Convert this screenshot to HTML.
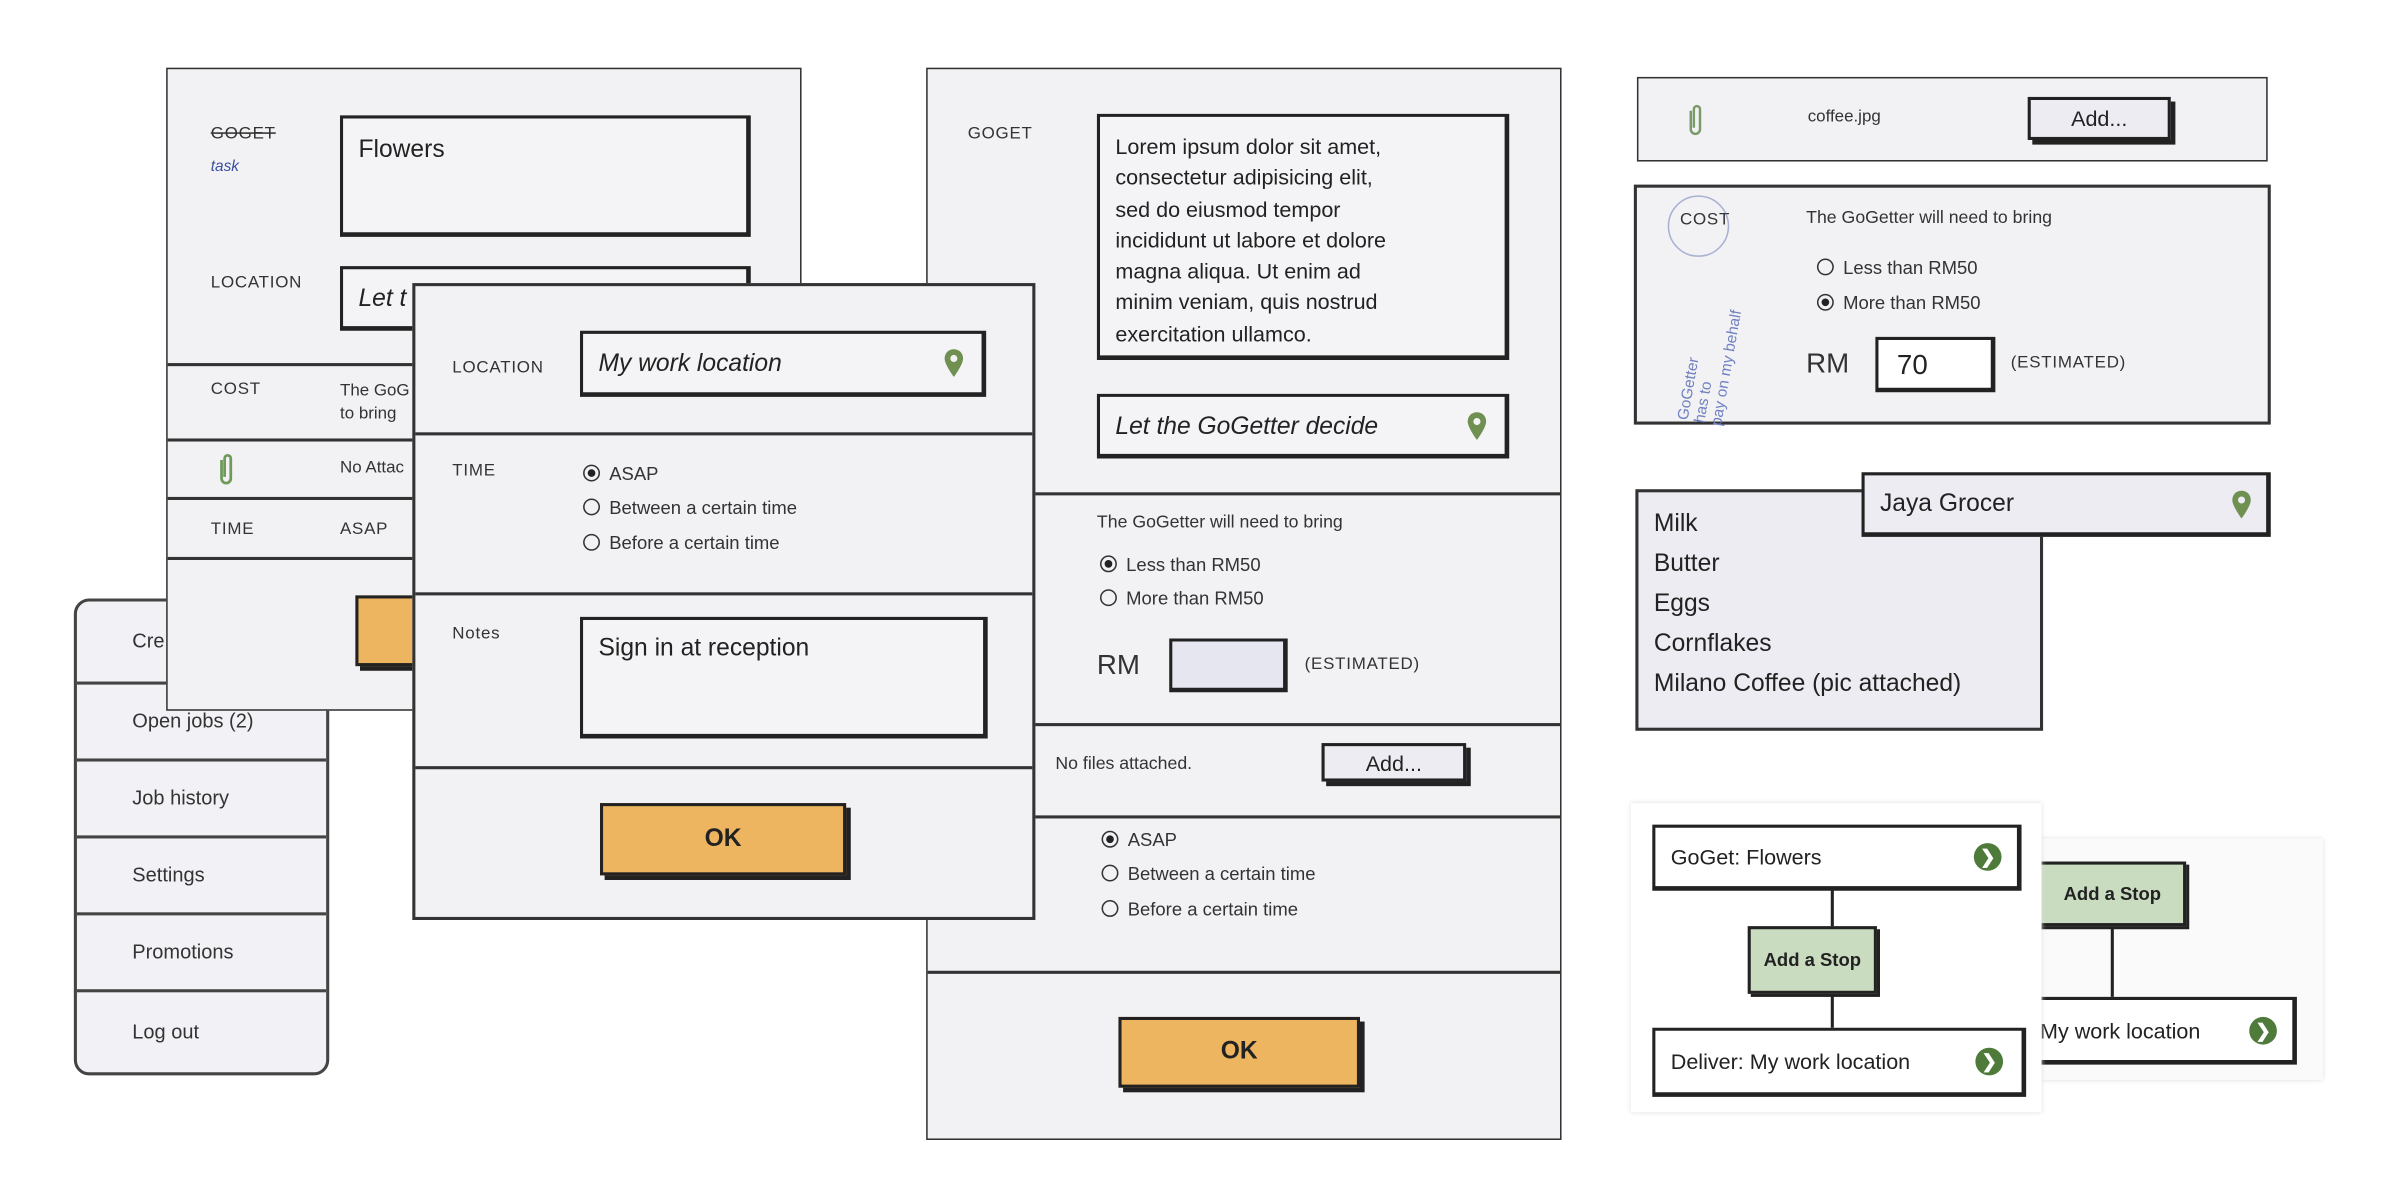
<!DOCTYPE html>
<html><head><meta charset="utf-8"><style>
*{box-sizing:border-box;margin:0;padding:0}
html,body{width:2400px;height:1200px;background:#fff;overflow:hidden}
#w{position:absolute;left:0;top:0;width:1560px;height:780px;transform:scale(1.53846);transform-origin:0 0;font-family:"Liberation Sans",sans-serif;color:#222}
.a{position:absolute}
.p{position:absolute;background:#f2f2f5;border:1.5px solid #333}
.lb{position:absolute;font-size:11px;letter-spacing:.5px;color:#333}
.bx{position:absolute;border:2px solid #222;border-right-width:3px;border-bottom-width:3px;background:#f4f4f6}
.hr{position:absolute;left:0;right:0;height:1.5px;background:#333}
.t{position:absolute;font-size:12px;color:#333;white-space:nowrap}
.r{display:inline-block;width:11px;height:11px;border:1.3px solid #333;border-radius:50%;vertical-align:-1px;margin-right:6px;position:relative}
.r.on::after{content:"";position:absolute;left:2px;top:2px;width:5px;height:5px;border-radius:50%;background:#222}
.ok{position:absolute;background:#eeb560;border:2px solid #222;box-shadow:3px 3px 0 #222;font-weight:bold;font-size:16px;display:flex;align-items:center;justify-content:center}
.btn{position:absolute;background:#ececf2;border:2px solid #222;box-shadow:3px 3px 0 #222;font-size:14px;display:flex;align-items:center;justify-content:center}
.it{font-style:italic;font-size:16px}
.g{position:absolute;background:#c9dcc0;border:2px solid #222;box-shadow:2px 2px 0 #222;font-weight:bold;font-size:12px;display:flex;align-items:center;justify-content:center}
.fb{position:absolute;background:#fff;border:2px solid #222;border-right-width:3px;border-bottom-width:3px;font-size:14px;padding-left:10px;display:flex;align-items:center}
.arr{position:absolute;width:18px;height:18px;border-radius:50%;background:#4e7a3a;color:#fff;font-size:12px;font-weight:bold;text-align:center;line-height:18px}
.vl{position:absolute;width:2px;background:#222}
</style></head><body><div id="w">

<!-- Menu -->
<div class="a" style="left:48px;top:389px;width:166px;height:310px;border:2.5px solid #444;border-radius:10px;background:#f2f2f6;overflow:hidden">
 <div class="t" style="left:36px;top:18px;font-size:13px">Cre</div>
 <div class="hr" style="top:52px;background:#444"></div><div class="t" style="left:36px;top:70px;font-size:13px">Open jobs (2)</div>
 <div class="hr" style="top:102px;background:#444"></div><div class="t" style="left:36px;top:120px;font-size:13px">Job history</div>
 <div class="hr" style="top:152px;background:#444"></div><div class="t" style="left:36px;top:170px;font-size:13px">Settings</div>
 <div class="hr" style="top:202px;background:#444"></div><div class="t" style="left:36px;top:220px;font-size:13px">Promotions</div>
 <div class="hr" style="top:252px;background:#444"></div><div class="t" style="left:36px;top:272px;font-size:13px">Log out</div>
</div>

<!-- Panel A -->
<div class="p" style="left:108px;top:44px;width:413px;height:418px">
 <div class="lb" style="left:28px;top:36px;text-decoration:line-through">GOGET</div>
 <div class="a" style="left:28px;top:58px;font-size:10px;color:#3a4fa0;font-style:italic">task</div>
 <div class="bx" style="left:112px;top:30px;width:267px;height:79px"><div class="a" style="left:10px;top:12px;font-size:16px">Flowers</div></div>
 <div class="lb" style="left:28px;top:133px">LOCATION</div>
 <div class="bx" style="left:112px;top:128px;width:267px;height:42px"><div class="a it" style="left:10px;top:11px">Let t</div></div>
 <div class="hr" style="top:191px"></div>
 <div class="lb" style="left:28px;top:202px">COST</div>
 <div class="t" style="left:112px;top:202px;font-size:11px;line-height:15px">The GoG<br>to bring</div>
 <div class="hr" style="top:240px"></div>
 <svg class="a" style="left:31px;top:248px" width="14" height="24" viewBox="0 0 14 24"><path d="M4 6v12a3 3 0 0 0 6 0V5a2 2 0 0 0-4 0v12" fill="none" stroke="#6f9a5a" stroke-width="1.8"/></svg>
 <div class="t" style="left:112px;top:253px;font-size:11px">No Attac</div>
 <div class="hr" style="top:278px"></div>
 <div class="lb" style="left:28px;top:293px">TIME</div>
 <div class="lb" style="left:112px;top:293px">ASAP</div>
 <div class="hr" style="top:317px"></div>
 <div class="ok" style="left:122px;top:342px;width:60px;height:46px"></div>
</div>

<!-- Panel C -->
<div class="p" style="left:602px;top:44px;width:413px;height:697px">
 <div class="lb" style="left:26px;top:36px">GOGET</div>
 <div class="bx" style="left:110px;top:29px;width:268px;height:160px"><div class="a" style="left:10px;top:9px;font-size:14px;line-height:20.3px;white-space:nowrap">Lorem ipsum dolor sit amet,<br>consectetur adipisicing elit,<br>sed do eiusmod tempor<br>incididunt ut labore et dolore<br>magna aliqua. Ut enim ad<br>minim veniam, quis nostrud<br>exercitation ullamco.</div></div>
 <div class="bx" style="left:110px;top:211px;width:268px;height:42px"><div class="a it" style="left:10px;top:11px">Let the GoGetter decide</div>
  <svg class="a" style="left:238px;top:9px" width="14" height="20" viewBox="0 0 14 20"><path d="M7 1C3.5 1 1 3.6 1 7c0 4 6 12 6 12s6-8 6-12c0-3.4-2.5-6-6-6z" fill="#6f9050"/><circle cx="7" cy="7" r="2.3" fill="#f4f4f6"/></svg></div>
 <div class="hr" style="top:275px"></div>
 <div class="t" style="left:110px;top:289px;font-size:11.5px">The GoGetter will need to bring</div>
 <div class="t" style="left:112px;top:315px;font-size:12px"><span class="r on"></span>Less than RM50</div>
 <div class="t" style="left:112px;top:337px;font-size:12px"><span class="r"></span>More than RM50</div>
 <div class="t" style="left:110px;top:377px;font-size:18px">RM</div>
 <div class="a" style="left:157px;top:370px;width:77px;height:35px;background:#e6e6f0;border:2px solid #222;border-right-width:3px;border-bottom-width:3px"></div>
 <div class="lb" style="left:245px;top:381px">(ESTIMATED)</div>
 <div class="hr" style="top:425px"></div>
 <div class="t" style="left:83px;top:446px;font-size:11.5px">No files attached.</div>
 <div class="btn" style="left:256px;top:438px;width:94px;height:25px">Add...</div>
 <div class="hr" style="top:485px"></div>
 <div class="t" style="left:113px;top:494px"><span class="r on"></span>ASAP</div>
 <div class="t" style="left:113px;top:516px"><span class="r"></span>Between a certain time</div>
 <div class="t" style="left:113px;top:539px"><span class="r"></span>Before a certain time</div>
 <div class="hr" style="top:586px"></div>
 <div class="ok" style="left:124px;top:616px;width:157px;height:46px">OK</div>
</div>

<!-- Panel B -->
<div class="p" style="left:268px;top:184px;width:405px;height:414px;border-width:2px">
 <div class="lb" style="left:24px;top:47px">LOCATION</div>
 <div class="bx" style="left:107px;top:29px;width:264px;height:43px"><div class="a it" style="left:10px;top:11px">My work location</div>
  <svg class="a" style="left:234px;top:9px" width="14" height="20" viewBox="0 0 14 20"><path d="M7 1C3.5 1 1 3.6 1 7c0 4 6 12 6 12s6-8 6-12c0-3.4-2.5-6-6-6z" fill="#6f9050"/><circle cx="7" cy="7" r="2.3" fill="#f2f2f5"/></svg></div>
 <div class="hr" style="top:95px"></div>
 <div class="lb" style="left:24px;top:114px">TIME</div>
 <div class="t" style="left:109px;top:115px"><span class="r on"></span>ASAP</div>
 <div class="t" style="left:109px;top:137px"><span class="r"></span>Between a certain time</div>
 <div class="t" style="left:109px;top:160px"><span class="r"></span>Before a certain time</div>
 <div class="hr" style="top:199px"></div>
 <div class="lb" style="left:24px;top:220px">Notes</div>
 <div class="bx" style="left:107px;top:215px;width:265px;height:79px"><div class="a" style="left:10px;top:10px;font-size:16px">Sign in at reception</div></div>
 <div class="hr" style="top:312px"></div>
 <div class="ok" style="left:120px;top:336px;width:160px;height:47px">OK</div>
</div>

<!-- Attach bar -->
<div class="p" style="left:1064px;top:50px;width:410px;height:55px">
 <svg class="a" style="left:30px;top:15px" width="14" height="24" viewBox="0 0 14 24"><path d="M4 6v12a3 3 0 0 0 6 0V5a2 2 0 0 0-4 0v12" fill="none" stroke="#7a9a6a" stroke-width="1.6"/></svg>
 <div class="t" style="left:110px;top:19px;font-size:11px">coffee.jpg</div>
 <div class="btn" style="left:253px;top:12px;width:93px;height:28px">Add...</div>
</div>

<!-- Cost panel -->
<div class="p" style="left:1062px;top:120px;width:414px;height:156px;border-width:2px">
 <div class="lb" style="left:28px;top:15px">COST</div>
 <div class="a" style="left:20px;top:5px;width:40px;height:40px;border-radius:50%;border:1px solid #6070b0;opacity:.5"></div>
 <div class="a" style="left:25px;top:150px;font-size:10px;color:#7080c0;transform:rotate(-80deg);transform-origin:0 0;white-space:nowrap;line-height:11px">GoGetter<br>has to<br>pay on my behalf</div>
 <div class="t" style="left:110px;top:14px;font-size:11.5px">The GoGetter will need to bring</div>
 <div class="t" style="left:117px;top:45px"><span class="r"></span>Less than RM50</div>
 <div class="t" style="left:117px;top:68px"><span class="r on"></span>More than RM50</div>
 <div class="t" style="left:110px;top:104px;font-size:18px">RM</div>
 <div class="a" style="left:155px;top:97px;width:78px;height:36px;background:#fff;border:2px solid #222;border-right-width:3px;border-bottom-width:3px;font-size:18px;padding:6px 0 0 12px">70</div>
 <div class="lb" style="left:243px;top:108px">(ESTIMATED)</div>
</div>

<!-- List -->
<div class="p" style="left:1063px;top:318px;width:265px;height:157px;background:#ececf2;border-width:2px">
 <div class="a" style="left:10px;top:8px;font-size:16px;line-height:26px">Milk<br>Butter<br>Eggs<br>Cornflakes<br>Milano Coffee (pic attached)</div>
</div>
<div class="a" style="left:1210px;top:307px;width:266px;height:42px;background:#ececf2;border:2px solid #222;border-right-width:3px;border-bottom-width:3px">
 <div class="a" style="left:10px;top:10px;font-size:16px">Jaya Grocer</div>
 <svg class="a" style="left:238px;top:9px" width="14" height="20" viewBox="0 0 14 20"><path d="M7 1C3.5 1 1 3.6 1 7c0 4 6 12 6 12s6-8 6-12c0-3.4-2.5-6-6-6z" fill="#6f9050"/><circle cx="7" cy="7" r="2.3" fill="#ececf2"/></svg>
</div>

<!-- Flow card 2 -->
<div class="a" style="left:1322px;top:545px;width:188px;height:157px;background:#fafafa;box-shadow:0 0 3px #ddd"></div>
<div class="vl" style="left:1372px;top:600px;height:48px"></div>
<div class="g" style="left:1325px;top:560px;width:96px;height:42px">Add a Stop</div>
<div class="fb" style="left:1318px;top:648px;width:175px;height:44px;padding-left:6px">My work location</div>
<div class="arr" style="left:1462px;top:661px">&#x276F;</div>

<!-- Flow card 1 -->
<div class="a" style="left:1060px;top:522px;width:267px;height:201px;background:#fff;box-shadow:0 0 3px #ddd"></div>
<div class="fb" style="left:1074px;top:536px;width:240px;height:43px">GoGet: Flowers</div>
<div class="arr" style="left:1283px;top:548px">&#x276F;</div>
<div class="vl" style="left:1190px;top:578px;height:92px"></div>
<div class="g" style="left:1136px;top:602px;width:84px;height:44px">Add a Stop</div>
<div class="fb" style="left:1074px;top:668px;width:243px;height:45px">Deliver: My work location</div>
<div class="arr" style="left:1284px;top:681px">&#x276F;</div>

</div></body></html>
